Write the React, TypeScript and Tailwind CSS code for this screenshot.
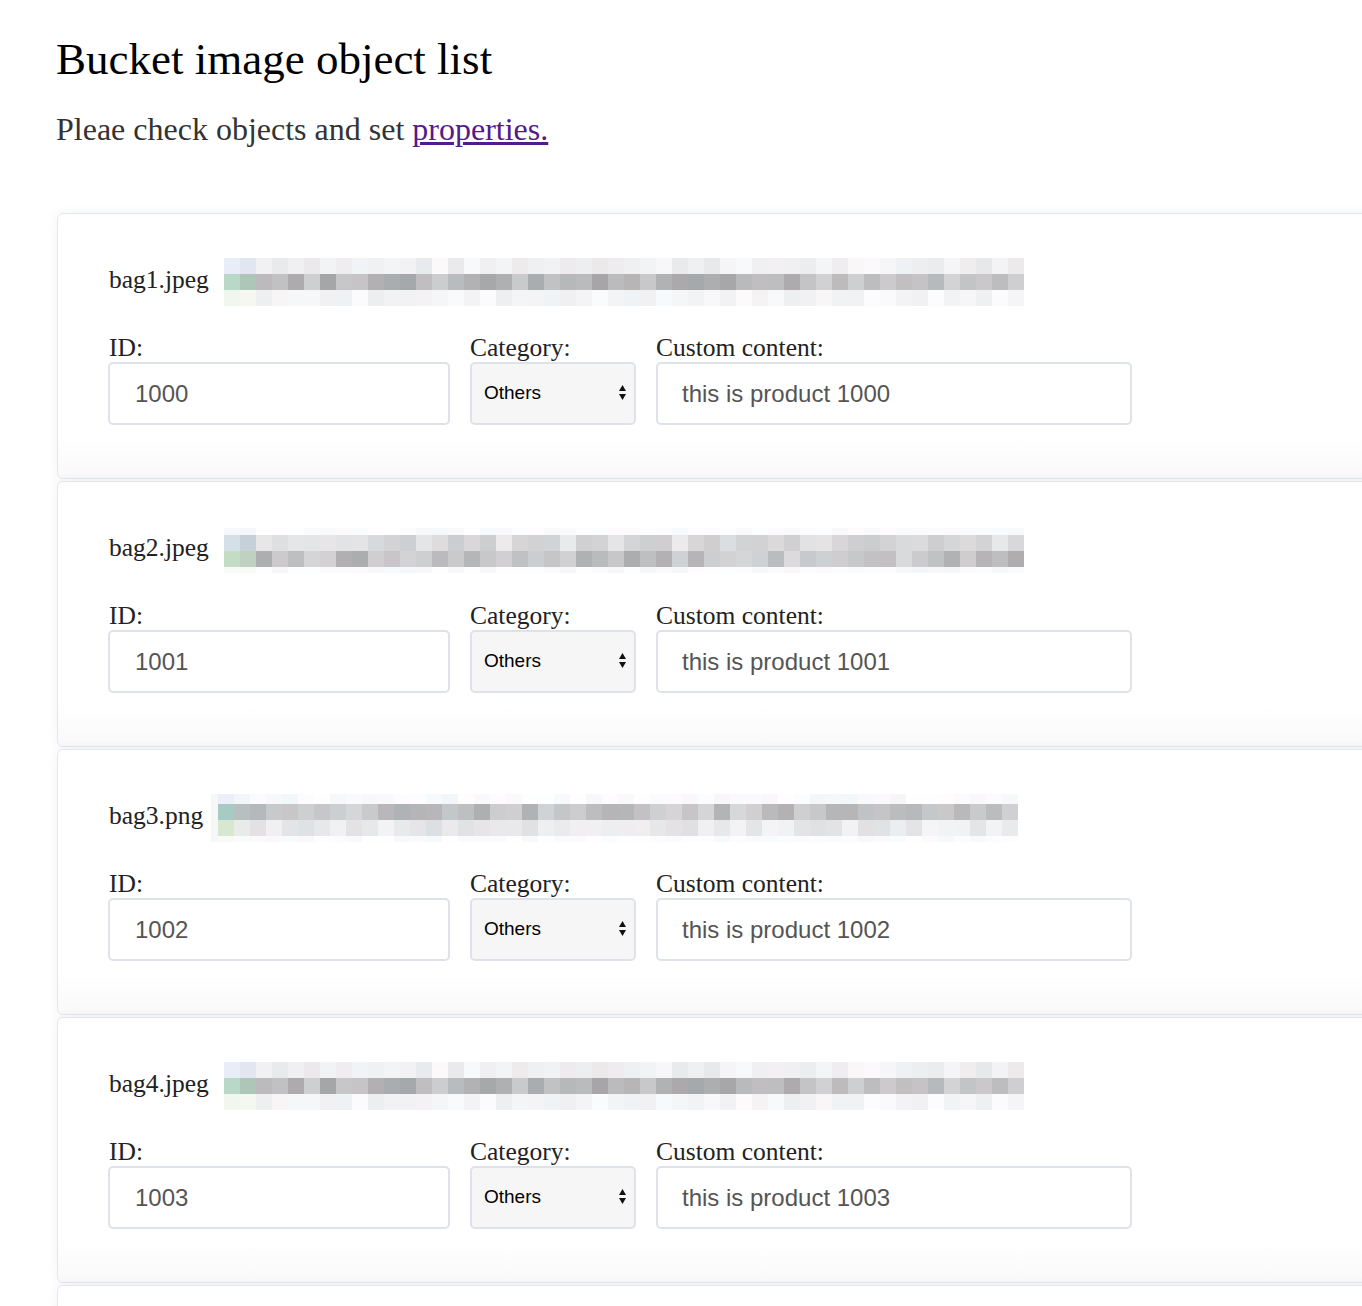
import React from 'react'

type Row = { h: number; lo: number; hi: number; first: [string, string] }

const STRIPS: Record<string, { offset: number; rows: Row[]; cols: number; lead: number }> = {
  a: {
    offset: 0,
    cols: 50,
    lead: 0,
    rows: [
      { h: 16, lo: 232, hi: 250, first: ['#e9edf8', '#e2e6f0'] },
      { h: 16, lo: 165, hi: 212, first: ['#bad8c8', '#aec6b8'] },
      { h: 16, lo: 238, hi: 252, first: ['#f1f6ee', '#f4f8f1'] },
    ],
  },
  b: {
    offset: 0,
    cols: 50,
    lead: 0,
    rows: [
      { h: 7, lo: 248, hi: 254, first: ['#f6f8fb', '#f4f6fa'] },
      { h: 16, lo: 205, hi: 234, first: ['#d3e0e8', '#c5d0d8'] },
      { h: 16, lo: 172, hi: 218, first: ['#c3dcc3', '#bfd2c2'] },
      { h: 6, lo: 246, hi: 254, first: ['#f7faf6', '#f8faf8'] },
    ],
  },
  c: {
    offset: -7,
    cols: 50,
    lead: 7,
    rows: [
      { h: 10, lo: 246, hi: 254, first: ['#eeeefb', '#f4f4fb'] },
      { h: 16, lo: 174, hi: 216, first: ['#a8cac4', '#b6c0c0'] },
      { h: 16, lo: 224, hi: 244, first: ['#d8e8d0', '#e8ece8'] },
      { h: 6, lo: 248, hi: 254, first: ['#f8faf8', '#fafafa'] },
    ],
  },
}

const ITEMS = [
  { name: 'bag1.jpeg', id: '1000', strip: 'a', seed: 7 },
  { name: 'bag2.jpeg', id: '1001', strip: 'b', seed: 19 },
  { name: 'bag3.png', id: '1002', strip: 'c', seed: 31 },
  { name: 'bag4.jpeg', id: '1003', strip: 'a', seed: 7 },
]

function rand(seed: number) {
  let s = seed
  return () => {
    s = (s * 9301 + 49297) % 233280
    return s / 233280
  }
}

// blurred thumbnail, drawn as blocks
function Strip({ kind, seed }: { kind: string; seed: number }) {
  const cfg = STRIPS[kind]
  const r = rand(seed)
  return (
    <div className="flex flex-col" style={{ marginLeft: cfg.offset }}>
      {cfg.rows.map((row, ri) => (
        <div key={ri} className="flex" style={{ height: row.h }}>
          {cfg.lead > 0 && <div className="w-[7px] h-full bg-[#f6f8f8]" />}
          {Array.from({ length: cfg.cols }).map((_, ci) => {
            let bg: string
            if (ci < 2) bg = row.first[ci]
            else {
              const v = Math.round(row.lo + r() * (row.hi - row.lo))
              const t = Math.round((r() - 0.5) * 6)
              bg = `rgb(${v + t},${v},${v + 2})`
            }
            return <div key={ci} className="w-4 h-full" style={{ backgroundColor: bg }} />
          })}
        </div>
      ))}
    </div>
  )
}

const cardCls =
  'w-[1360px] h-[266px] shrink-0 bg-linear-to-b from-white from-85% to-[#f9f9fa] border border-[#e3e6ee] rounded-[6px] shadow-[0_0_12px_rgba(40,50,80,0.06)]'

function ObjectCard({ item }: { item: (typeof ITEMS)[number] }) {
  return (
    <div className={`${cardCls} pt-[44px] pl-[50px]`}>
      <div className="flex items-center h-[48px] gap-[15px] pl-px">
        <span className="text-[25.5px] leading-[44px] pb-[4px] text-[#222]">{item.name}</span>
        <Strip kind={item.strip} seed={item.seed} />
      </div>
      <div className="flex gap-[20px] mt-[28px]">
        <div className="flex flex-col w-[342px]">
          <label className="text-[25.5px] leading-[28px] text-[#222] pl-px">ID:</label>
          <input
            readOnly
            value={item.id}
            className="h-[63px] border-2 border-[#dfe2e8] rounded-[5px] pl-[25px] text-[24px] text-[#555] font-['Liberation_Sans',Arial,sans-serif] outline-none"
          />
        </div>
        <div className="flex flex-col w-[166px]">
          <label className="text-[25.5px] leading-[28px] text-[#222]">Category:</label>
          <div className="relative">
            <select
              defaultValue="Others"
              className="w-full h-[63px] appearance-none bg-[#f6f6f7] border-2 border-[#dfe2e8] rounded-[5px] pl-[12px] text-[19px] text-black font-['Liberation_Sans',Arial,sans-serif] outline-none"
            >
              <option>Others</option>
            </select>
            <svg className="absolute right-[9px] top-[22px] pointer-events-none" width="9" height="17" viewBox="0 0 9 17">
              <path d="M4.5 1 L8 7 L1 7 Z" fill="#111" />
              <path d="M4.5 16 L8 10 L1 10 Z" fill="#111" />
            </svg>
          </div>
        </div>
        <div className="flex flex-col w-[476px]">
          <label className="text-[25.5px] leading-[28px] text-[#222]">Custom content:</label>
          <input
            readOnly
            value={`this is product ${item.id}`}
            className="h-[63px] border-2 border-[#dfe2e8] rounded-[5px] pl-[24px] text-[24px] text-[#555] font-['Liberation_Sans',Arial,sans-serif] outline-none"
          />
        </div>
      </div>
    </div>
  )
}

export default function App() {
  return (
    <div className="h-[1306px] bg-white overflow-hidden font-['Liberation_Serif','Times_New_Roman',serif] pl-[56px]">
      <h1 className="text-[45px] leading-[45px] text-black pt-[37px]">Bucket image object list</h1>
      <p className="text-[32px] leading-[32px] text-[#333] mt-[31px]">
        Pleae check objects and set{' '}
        <a href="#" className="text-[#551a8b] underline">
          properties.
        </a>
      </p>
      <div className="mt-[68px] ml-px flex flex-col gap-[2px]">
        {ITEMS.map((it) => (
          <ObjectCard key={it.name} item={it} />
        ))}
        <div className={cardCls} />
      </div>
    </div>
  )
}
